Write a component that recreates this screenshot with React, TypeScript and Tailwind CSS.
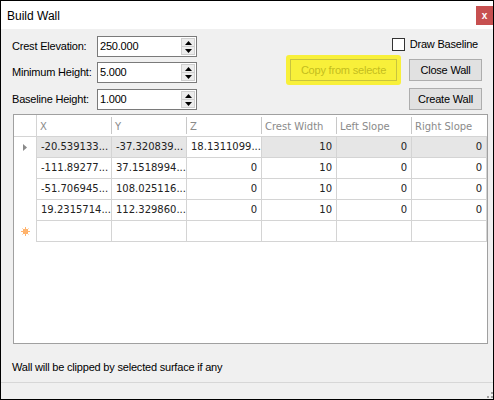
import React from 'react';

interface RowData {
    x: string;
    y: string;
    z: string;
    crest: string;
    left: string;
    right: string;
}

const rows: RowData[] = [
    { x: '-20.539133...', y: '-37.320839...', z: '18.1311099...', crest: '10', left: '0', right: '0' },
    { x: '-111.89277...', y: '37.1518994...', z: '0', crest: '10', left: '0', right: '0' },
    { x: '-51.706945...', y: '108.025116...', z: '0', crest: '10', left: '0', right: '0' },
    { x: '19.2315714...', y: '112.329860...', z: '0', crest: '10', left: '0', right: '0' },
];

const headers = ['X', 'Y', 'Z', 'Crest Width', 'Left Slope', 'Right Slope'];

const SpinInput: React.FC<{ value: string }> = ({ value }) => (
    <div className="flex h-[21px] w-[100px] border border-[#7a7a7a] bg-white">
        <span className="flex-1 pl-[2px] text-[11px] leading-[19px] text-black">{value}</span>
        <div className="my-[1px] mr-[1px] flex w-[14px] flex-col border border-[#cfcfcf] bg-[#ececec]">
            <div className="flex flex-1 items-center justify-center border-b border-[#cfcfcf]">
                <svg width="7" height="4" viewBox="0 0 7 4">
                    <path d="M0 4 L3.5 0 L7 4 Z" fill="#000" />
                </svg>
            </div>
            <div className="flex flex-1 items-center justify-center">
                <svg width="7" height="4" viewBox="0 0 7 4">
                    <path d="M0 0 L3.5 4 L7 0 Z" fill="#000" />
                </svg>
            </div>
        </div>
    </div>
);

const WinButton: React.FC<{ label: string }> = ({ label }) => (
    <button className="h-[22px] w-[73px] border border-[#adadad] bg-[#e1e1e1] text-[11px] text-black">
        {label}
    </button>
);

const App: React.FC = () => {
    return (
        <div className="flex h-[400px] w-[494px] flex-col border border-black bg-[#f0f0f0] font-['Liberation_Sans',sans-serif] tracking-[-0.2px]">
            {/* Title bar */}
            <div className="flex h-[28px] items-start justify-between bg-white">
                <span className="mt-[6px] pl-[6px] text-[12px] tracking-normal text-black">Build Wall</span>
                <div className="mt-[5px] flex h-[19px] w-[17px] items-center justify-center bg-[#c75050] text-[10px] font-bold text-white">
                    x
                </div>
            </div>

            {/* Body */}
            <div className="flex flex-1 flex-col pl-[12px] pr-[5px] pt-[7px]">
                <div className="flex h-[74px] justify-between pr-[6px]">
                    <div className="-ml-[1px] flex flex-col gap-[5px] text-[11px] text-black">
                        <div className="flex items-center">
                            <span className="w-[85px]">Crest Elevation:</span>
                            <SpinInput value="250.000" />
                        </div>
                        <div className="flex items-center">
                            <span className="w-[85px]">Minimum Height:</span>
                            <SpinInput value="5.000" />
                        </div>
                        <div className="mt-[1px] flex items-center">
                            <span className="w-[85px]">Baseline Height:</span>
                            <SpinInput value="1.000" />
                        </div>
                    </div>

                    <div className="flex flex-col items-end">
                        <div className="mr-[4px] mt-[1px] flex h-[15px] items-center gap-[5px] text-[11px] text-black">
                            <span className="h-[13px] w-[13px] border border-[#333] bg-white" />
                            <span>Draw Baseline</span>
                        </div>
                        <div className="mt-[7px] flex items-center gap-[8px]">
                            <div className="-my-[4px] rounded-[3px] bg-[#f8f03a] px-[4px] py-[4px]">
                                <div className="flex h-[22px] w-[107px] items-center justify-center border border-[#c9c43e] text-[11px] text-[#c4bd1e]">
                                    Copy from selecte
                                </div>
                            </div>
                            <WinButton label="Close Wall" />
                        </div>
                        <div className="mt-[5px]">
                            <WinButton label="Create Wall" />
                        </div>
                    </div>
                </div>

                {/* Grid */}
                <div className="mt-[4px] h-[230px] w-[475px] border border-[#a0a0a0] bg-white font-['DejaVu_Sans',sans-serif] text-[10px] tracking-normal">
                    <div className="flex h-[22px] border-b border-[#d4d4d4]">
                        <div className="w-[23px] border-r border-[#d4d4d4]" />
                        {headers.map((h, i) => (
                            <div key={h} className="flex w-[75px]">
                                <span className="flex-1 pl-[3px] pt-[4px] text-[#8a8a8a]">{h}</span>
                                {i < headers.length - 1 && <span className="my-[2px] w-px bg-[#c8c8c8]" />}
                            </div>
                        ))}
                    </div>
                    {rows.map((r, i) => {
                        const sel = i === 0;
                        const cells = [r.x, r.y, r.z, r.crest, r.left, r.right];
                        return (
                            <div key={i} className="flex h-[21px]">
                                <div className="flex w-[23px] items-center justify-center border-r border-[#d4d4d4]">
                                    {sel && (
                                        <svg width="4" height="7" viewBox="0 0 4 7">
                                            <path d="M0 0 L4 3.5 L0 7 Z" fill="#8a8a8a" />
                                        </svg>
                                    )}
                                </div>
                                {cells.map((c, j) => (
                                    <div
                                        key={j}
                                        className={`w-[75px] overflow-hidden whitespace-nowrap border-b border-r border-[#d4d4d4] px-[4px] text-right leading-[20px] text-[#222] ${
                                            sel && j !== 2 ? 'bg-[#e6e6e6]' : 'bg-white'
                                        }`}
                                    >
                                        {c}
                                    </div>
                                ))}
                            </div>
                        );
                    })}
                    <div className="flex h-[21px]">
                        <div className="flex w-[23px] items-center justify-center border-r border-[#d4d4d4]">
                            <svg width="9" height="9" viewBox="0 0 9 9">
                                <circle cx="4.5" cy="4.5" r="2.5" fill="#ff9a3c" />
                                <path d="M4.5 0 V9 M0 4.5 H9 M1.5 1.5 L7.5 7.5 M7.5 1.5 L1.5 7.5" stroke="#ffb46e" strokeWidth="1" />
                            </svg>
                        </div>
                        {headers.map((h) => (
                            <div key={h} className="w-[75px] border-b border-r border-[#d4d4d4]" />
                        ))}
                    </div>
                </div>

                <div className="mt-[15px] -ml-[1px] text-[11px] text-black">Wall will be clipped by selected surface if any</div>
            </div>

            {/* Status strip */}
            <div className="relative h-[17px] border-t border-[#d7d7d7]">
                <svg className="absolute bottom-[1px] right-[0px]" width="6" height="6" viewBox="0 0 6 6">
                    <rect x="4" y="0" width="2" height="2" fill="#a0a0a0" />
                    <rect x="0" y="4" width="2" height="2" fill="#a0a0a0" />
                    <rect x="4" y="4" width="2" height="2" fill="#a0a0a0" />
                </svg>
            </div>
        </div>
    );
};

export default App;
